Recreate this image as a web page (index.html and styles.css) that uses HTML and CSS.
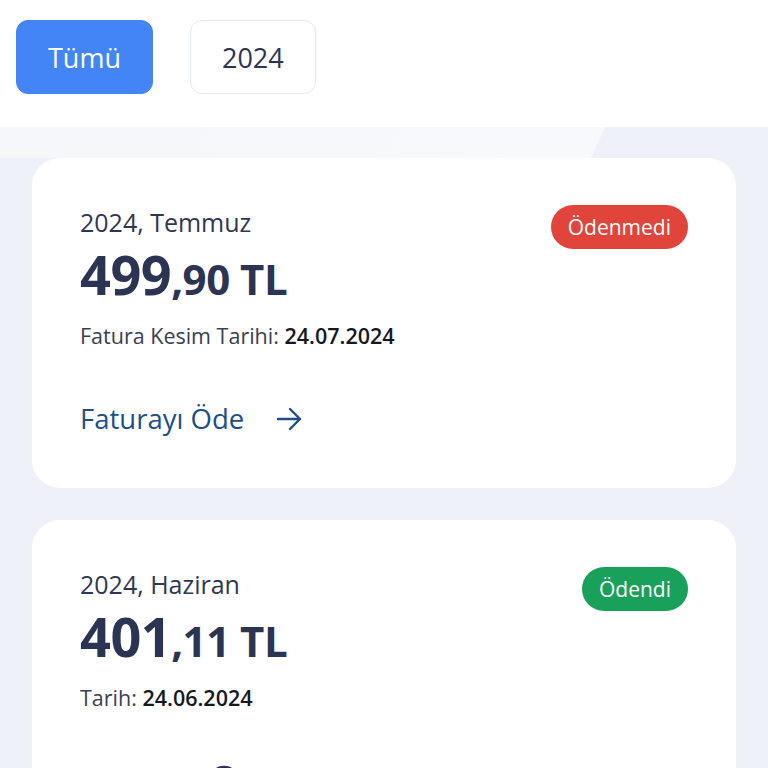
FILE: index.html
```html
<!DOCTYPE html>
<html lang="tr">
<head>
  <meta charset="UTF-8">
  <meta name="viewport" content="width=device-width, initial-scale=1">
  <title>Faturalarım</title>
  <link rel="stylesheet" href="styles.css">
</head>
<body>

  <!-- FILTER TABS -->
  <header class="filters">
    <button class="tab active">Tümü</button>
    <button class="tab">2024</button>
  </header>

  <!-- INVOICE LIST -->
  <main class="invoices">
    <div class="card">
      <div class="card-top">
        <div>
          <p class="period">2024, Temmuz</p>
          <p class="amount">499<span class="cents">,90 TL</span></p>
        </div>
        <span class="badge unpaid">Ödenmedi</span>
      </div>
      <p class="date-line">Fatura Kesim Tarihi: <b>24.07.2024</b></p>
      <a class="card-link" href="#">
        Faturayı Öde
        <svg width="28" height="28" viewBox="0 0 28 28" fill="none" stroke="currentColor" stroke-width="2.4" stroke-linecap="round" stroke-linejoin="round"><path d="M3 14h22M15 4l10 10-10 10"/></svg>
      </a>
    </div>

    <div class="card">
      <div class="card-top">
        <div>
          <p class="period">2024, Haziran</p>
          <p class="amount">401<span class="cents">,11 TL</span></p>
        </div>
        <span class="badge paid">Ödendi</span>
      </div>
      <p class="date-line">Tarih: <b>24.06.2024</b></p>
      <a class="card-link detail" href="#">
        Detaylar
        <svg width="32" height="32" viewBox="0 0 24 24" fill="none" stroke="currentColor" stroke-width="2" stroke-linecap="round"><circle cx="12" cy="12" r="10.5"/><path d="M12 11v6M12 7.5v.5"/></svg>
      </a>
    </div>
  </main>

</body>
</html>
```

FILE: styles.css
```css
/* General Reset */
* {
  margin: 0;
  padding: 0;
  box-sizing: border-box;
  font-family: 'Open Sans', 'Noto Sans', sans-serif;
}
body {
  background: #eef1f7;
  color: #2b3452;
}

/* ===== FILTER TABS ===== */
.filters {
  display: flex;
  gap: 37px;
  padding: 20px 16px 33px;
  background: #fff;
}
.tab {
  height: 74px;
  padding: 0 31px;
  font-size: 27px;
  border-radius: 12px;
  border: 1px solid #e5e9f2;
  background: #fff;
  color: #2b3452;
  cursor: pointer;
}
.tab.active {
  background: #4385f5;
  border-color: #4385f5;
  color: #fff;
  padding: 0 31px;
}

/* ===== INVOICE CARDS ===== */
.invoices {
  display: flex;
  flex-direction: column;
  gap: 32px;
  padding: 31px 32px 40px;
  background:
    linear-gradient(115deg, #f5f7fa 0, #f8f9fc 548px, transparent 549px) no-repeat top left / 100% 31px,
    #eef1f7;
}
.card {
  background: #fff;
  border-radius: 28px;
  padding: 47px 48px 51px;
}
.card-top {
  display: flex;
  justify-content: space-between;
  align-items: flex-start;
}
.period {
  font-size: 25px;
  line-height: 34px;
  color: #2f3651;
}
.amount {
  margin-top: 4px;
  font-size: 54px;
  line-height: 62px;
  font-weight: 700;
  letter-spacing: -0.5px;
  color: #2b3452;
}
.amount .cents {
  font-size: 42px;
}
.badge {
  height: 44px;
  padding: 0 17px;
  border-radius: 22px;
  font-size: 21px;
  line-height: 44px;
  color: #fff;
}
.badge.unpaid { background: #e0443a; }
.badge.paid { background: #19a05a; }
.date-line {
  margin-top: 11px;
  font-size: 21.5px;
  color: #3a4052;
}
.date-line b {
  font-weight: 600;
  color: #15181f;
}
.card-link {
  display: flex;
  align-items: center;
  gap: 31px;
  margin-top: 50px;
  font-size: 27.5px;
  color: #1d4f86;
  text-decoration: none;
}
.card-link.detail {
  gap: 20px;
  color: #2b3452;
}
```
